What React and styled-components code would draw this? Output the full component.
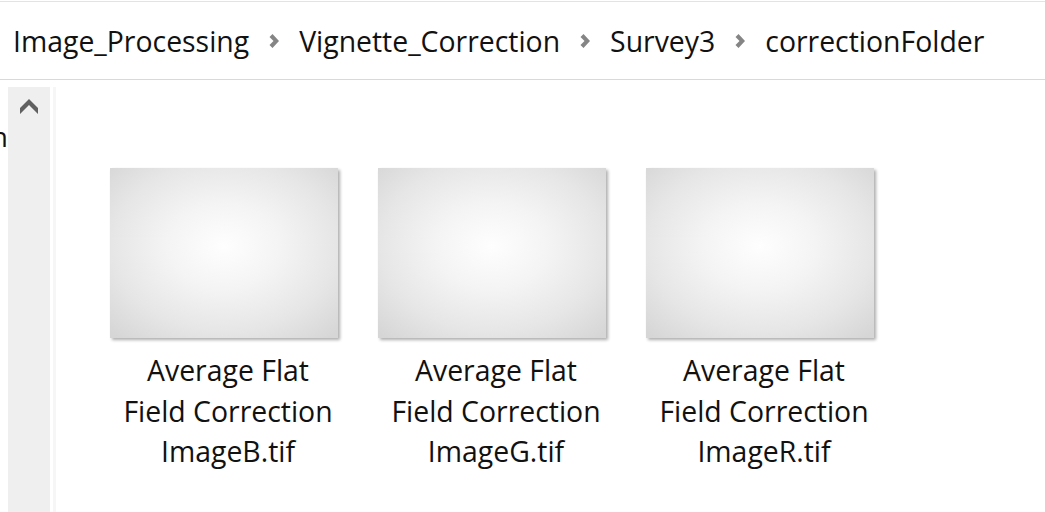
import React from "react";
import styled, { createGlobalStyle } from "styled-components";

const Global = createGlobalStyle`
  html, body { margin: 0; padding: 0; background: #ffffff; }
  body { font-family: "Open Sans", "Noto Sans", sans-serif; overflow: hidden; }
`;

const Window = styled.div`
  width: 1045px;
  height: 512px;
  display: flex;
  flex-direction: column;
  background: #fff;
  overflow: hidden;
`;

const AddressBar = styled.div`
  height: 77px;
  margin-top: 1px;
  border-top: 1px solid #e3e3e3;
  border-bottom: 1px solid #d9d9d9;
  display: flex;
  align-items: center;
  padding-left: 13px;
  box-sizing: content-box;
`;

const Crumb = styled.span`
  font-size: 28.4px;
  color: #111;
  white-space: nowrap;
  line-height: 1;
  padding-top: 2px;
`;

const Sep = styled.span`
  display: inline-flex;
  align-items: center;
  margin: 0 20px 0 20px;
  width: 10px;
  height: 14px;
`;

const Body = styled.div`
  flex: 1;
  display: flex;
  min-height: 0;
`;

const NavPane = styled.div`
  width: 8px;
  overflow: hidden;
  display: flex;
  justify-content: flex-end;
  padding-top: 42px;
  font-size: 28px;
  color: #111;
  line-height: 1;
`;

const Scrollbar = styled.div`
  width: 42px;
  margin-top: 7px;
  background: #efefef;
  display: flex;
  justify-content: center;
  align-items: flex-start;
  padding-top: 12px;
  box-sizing: border-box;
`;

const Splitter = styled.div`
  width: 3px;
  margin-left: 3px;
  margin-top: 7px;
  background: #f6f6f6;
`;

const Content = styled.div`
  flex: 1;
  display: flex;
  align-items: flex-start;
  gap: 28px;
  padding: 88px 0 0 52px;
`;

const Tile = styled.div`
  width: 240px;
  display: flex;
  flex-direction: column;
  align-items: flex-start;
`;

const Thumb = styled.div`
  width: 228px;
  height: 170px;
  margin-left: 2px;
  background: radial-gradient(ellipse 70% 72% at 50% 46%, #fefefe 0%, #f4f4f4 35%, #e6e6e6 70%, #d6d6d6 100%);
  box-shadow: 2px 2px 3px rgba(0, 0, 0, 0.32);
`;

const Caption = styled.div`
  width: 100%;
  margin-top: 12px;
  text-align: center;
  font-size: 28.4px;
  line-height: 40.5px;
  color: #111;
  white-space: nowrap;
`;

const Chevron = () => (
  <Sep>
    <svg width="10" height="14" viewBox="0 0 10 14">
      <polygon points="0.5,3 3.5,0 10,7 3.5,14 0.5,11 4.5,7" fill="#858585" />
    </svg>
  </Sep>
);

const UpArrow = () => (
  <svg width="18" height="16" viewBox="0 0 18 16">
    <polygon points="9,0 18,9 18,15 9,6 0,15 0,9" fill="#606060" />
  </svg>
);

const crumbs = ["Image_Processing", "Vignette_Correction", "Survey3", "correctionFolder"];
const files = [
  ["Average Flat", "Field Correction", "ImageB.tif"],
  ["Average Flat", "Field Correction", "ImageG.tif"],
  ["Average Flat", "Field Correction", "ImageR.tif"],
];

export default function App() {
  return (
    <Window>
      <Global />
      <AddressBar>
        {crumbs.map((c, i) => (
          <React.Fragment key={c}>
            {i > 0 && <Chevron />}
            <Crumb>{c}</Crumb>
          </React.Fragment>
        ))}
      </AddressBar>
      <Body>
        <NavPane>
          <span>n</span>
        </NavPane>
        <Scrollbar>
          <UpArrow />
        </Scrollbar>
        <Splitter />
        <Content>
          {files.map((lines, i) => (
            <Tile key={i}>
              <Thumb />
              <Caption>
                {lines.map((l) => (
                  <div key={l}>{l}</div>
                ))}
              </Caption>
            </Tile>
          ))}
        </Content>
      </Body>
    </Window>
  );
}
